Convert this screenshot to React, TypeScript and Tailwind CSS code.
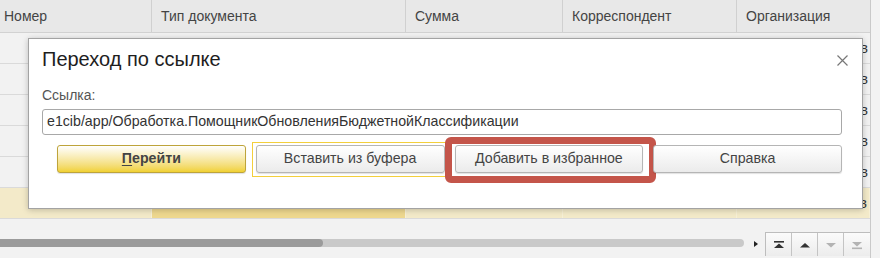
import React from "react";

const cols = [152, 254, 157, 174, 133];
const headers = ["Номер", "Тип документа", "Сумма", "Корреспондент", "Организация"];

function Row({ selected }: { selected?: boolean }) {
  return (
    <div className="flex h-[31px] border-b border-[#dadada]">
      {cols.map((w, i) => (
        <div
          key={i}
          style={{ width: w }}
          className={
            "relative h-full shrink-0 " +
            (selected
              ? i === 1
                ? "bg-[#eed88f] border-r border-[#f7f0d6]"
                : "bg-[#f3eac9] border-r border-[#f7f0d6]"
              : "")
          }
        >
          {i === 4 && (
            <span className="absolute right-[2px] top-[7px] text-[14px] leading-[16px] text-[#333]">в</span>
          )}
        </div>
      ))}
    </div>
  );
}

function Btn({ children, className = "" }: { children: React.ReactNode; className?: string }) {
  return (
    <div
      className={
        "relative flex h-[28px] items-center justify-center rounded-[3px] border border-[#b5b5b5] bg-gradient-to-b from-[#ffffff] to-[#ebebeb] text-[14.2px] text-[#444] shadow-[0_1px_1px_rgba(0,0,0,0.12)] " +
        className
      }
    >
      {children}
    </div>
  );
}

export default function App() {
  return (
    <div className="relative h-[258px] w-[880px] overflow-hidden bg-[#f2f2f2] font-['Liberation_Sans',Arial,sans-serif]">
      <div className="flex h-full">
        <div className="flex w-[871px] flex-col border-r border-[#c9c9c9]">
          {/* header */}
          <div className="flex h-[33px] border-b border-[#d2d2d2] bg-[#e8e8e8]">
            {cols.map((w, i) => (
              <div
                key={i}
                style={{ width: w }}
                className={
                  "flex h-full shrink-0 items-center text-[14px] text-[#444] " +
                  (i > 0 ? "pl-[9px] " : "pl-[4px] ") +
                  (i < 4 ? "border-r border-[#d0d0d0]" : "")
                }
              >
                {headers[i]}
              </div>
            ))}
          </div>
          {/* rows */}
          <Row />
          <Row />
          <Row />
          <Row />
          <Row />
          <Row selected />
          {/* bottom area */}
          <div className="flex flex-1 items-start pt-[13px]">
            <div className="mt-[7px] flex h-[8px] w-[744px] overflow-hidden rounded-r-full bg-[#c9c9c9]">
              <div className="h-full w-[323px] rounded-r-full bg-[#9b9b9b]" />
            </div>
            <div className="ml-[10px] mt-[9px] h-0 w-0 border-y-[3px] border-l-[4px] border-y-transparent border-l-[#222]" />
            <div className="ml-[7px] flex h-[24px] border-t border-l border-[#bdbdbd] bg-[#f4f4f4]">
              {[0, 1, 2, 3].map((i) => (
                <div
                  key={i}
                  className="flex h-full w-[26px] items-center justify-center border-r border-[#c4c4c4] bg-gradient-to-b from-[#fbfbfb] to-[#ececec] last:border-r-0"
                >
                  <svg width="12" height="10" viewBox="0 0 12 10">
                    {i === 0 && (
                      <>
                        <rect x="1" y="1" width="10" height="1.6" fill="#333" />
                        <path d="M1 8 L6 3.5 L11 8 Z" fill="#333" />
                      </>
                    )}
                    {i === 1 && <path d="M1 7.5 L6 3 L11 7.5 Z" fill="#333" />}
                    {i === 2 && <path d="M1 3 L6 7.5 L11 3 Z" fill="#b3b3b3" />}
                    {i === 3 && (
                      <>
                        <path d="M1 2 L6 6.5 L11 2 Z" fill="#b3b3b3" />
                        <rect x="1" y="7.5" width="10" height="1.6" fill="#b3b3b3" />
                      </>
                    )}
                  </svg>
                </div>
              ))}
            </div>
          </div>
        </div>
        <div className="flex-1" />
      </div>

      {/* dialog */}
      <div className="absolute left-[28px] top-[38px] h-[171px] w-[835px] border border-[#a3a3a3] bg-white px-[13px] pt-[8px] shadow-[0_1px_6px_rgba(0,0,0,0.22)]">
        <div className="text-[20px] leading-[24px] text-[#1e1e1e]">Переход по ссылке</div>
        <svg className="absolute right-[14px] top-[16px]" width="11" height="11" viewBox="0 0 11 11">
          <path d="M0.5 0.5 L10.5 10.5 M10.5 0.5 L0.5 10.5" stroke="#777" strokeWidth="1.2" fill="none" />
        </svg>
        <div className="mt-[16px] text-[14px] leading-[16px] text-[#555]">Ссылка:</div>
        <div className="mt-[6px] flex h-[26px] w-[800px] items-center rounded-[3px] border border-[#a8a8a8] px-[4px] text-[14.2px] text-[#333]">
          e1cib/app/Обработка.ПомощникОбновленияБюджетнойКлассификации
        </div>
        <div className="ml-[15px] mt-[10px] grid w-[785px] grid-cols-4 gap-[10px]">
          <Btn className="border-[#bea43a] from-[#fde752] to-[#f1d12e] font-bold text-[#333]">
            <span>
              <span className="underline underline-offset-2">П</span>ерейти
            </span>
          </Btn>
          <div className="relative">
            <div className="pointer-events-none absolute -bottom-[4px] -left-[4px] -right-[2px] -top-[3px] border border-[#f3cf3c]" />
            <Btn>Вставить из буфера</Btn>
          </div>
          <div className="relative">
            <div className="pointer-events-none absolute -bottom-[10px] -left-[10px] -right-[13px] -top-[8px] rounded-[6px] border-[7px] border-[#c4554a]" />
            <Btn>Добавить в избранное</Btn>
          </div>
          <Btn>Справка</Btn>
        </div>
      </div>
    </div>
  );
}
